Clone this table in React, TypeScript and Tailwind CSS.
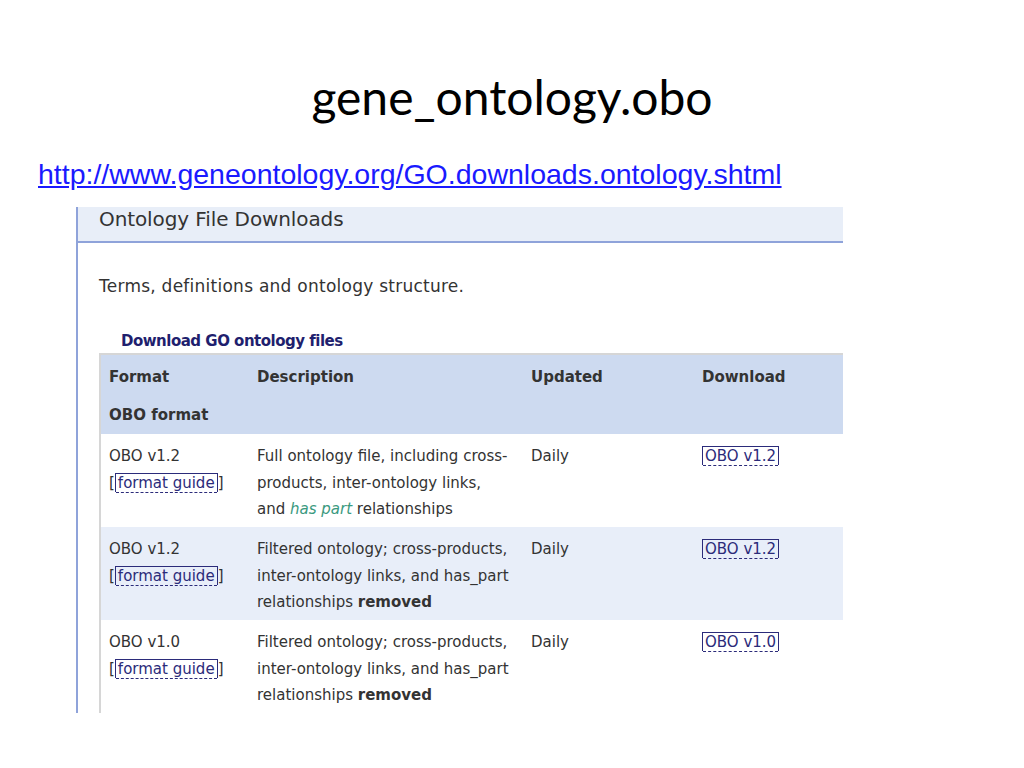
const body = "font-['DejaVu_Sans',sans-serif]";

function GuideLink({ children }: { children: React.ReactNode }) {
  return (
    <span className="border border-b-0 border-[#2b2b7a] text-[#2b2b7a] px-[2px] leading-[18px] inline-block relative">
      {children}
      <span className="absolute left-0 right-0 bottom-[-1px] border-b border-dashed border-[#2b2b7a]" />
    </span>
  );
}

function FormatCell({ version }: { version: string }) {
  return (
    <div className="pl-[8px]">
      <div>{version}</div>
      <div>
        [<GuideLink>format guide</GuideLink>]
      </div>
    </div>
  );
}

type Row = {
  version: string;
  desc: React.ReactNode;
  download: string;
  alt?: boolean;
};

const rows: Row[] = [
  {
    version: "OBO v1.2",
    desc: (
      <>
        Full ontology file, including cross-
        <br />
        products, inter-ontology links,
        <br />
        and <i className="text-[#3b9a80]">has part</i> relationships
      </>
    ),
    download: "OBO v1.2",
  },
  {
    version: "OBO v1.2",
    desc: (
      <>
        Filtered ontology; cross-products,
        <br />
        inter-ontology links, and has_part
        <br />
        relationships <b>removed</b>
      </>
    ),
    download: "OBO v1.2",
    alt: true,
  },
  {
    version: "OBO v1.0",
    desc: (
      <>
        Filtered ontology; cross-products,
        <br />
        inter-ontology links, and has_part
        <br />
        relationships <b>removed</b>
      </>
    ),
    download: "OBO v1.0",
  },
];

export default function App() {
  return (
    <div className="w-[1024px] h-[768px] bg-white overflow-hidden">
      <h1 className="text-center pt-[69px] text-[48px] leading-[56px] text-black font-['Lato',sans-serif]">
        gene_ontology.obo
      </h1>
      <div className="pl-[38px] mt-[33px] text-[28.5px] leading-[32px] font-['Liberation_Sans',sans-serif]">
        <a className="text-[#1a1aff] underline">http://www.geneontology.org/GO.downloads.ontology.shtml</a>
      </div>

      <div className={`ml-[76px] mt-[17px] w-[767px] h-[506px] overflow-hidden border-l-2 border-[#8fa3da] text-[#333] ${body}`}>
        <div className="h-[36px] bg-[#e8eef8] border-b-2 border-[#8fa3da] pl-[21px] pt-[1px] text-[20px] leading-[22px] -tracking-[0.1px]">
          Ontology File Downloads
        </div>
        <div className="pl-[21px] mt-[33px] text-[17px] leading-[20px] tracking-[0.25px]">
          Terms, definitions and ontology structure.
        </div>
        <div className="pl-[43px] mt-[35px] text-[15px] leading-[20px] font-bold text-[#1f1f6e] -tracking-[0.5px]">
          Download GO ontology files
        </div>

        <div className="ml-[21px] mt-[2px] border-t-2 border-l-2 border-[#d6d6d6] text-[15px]">
          <div className="bg-[#cddaf0] h-[79px] font-bold">
            <div className="grid grid-cols-[146px_274px_171px_151px] h-[40px] items-center pt-[4px]">
              <div className="pl-[8px]">Format</div>
              <div className="pl-[10px]">Description</div>
              <div className="pl-[10px]">Updated</div>
              <div className="pl-[10px]">Download</div>
            </div>
            <div className="pl-[8px] h-[39px] flex items-center pt-[1px]">OBO format</div>
          </div>
          {rows.map((r, i) => (
            <div
              key={i}
              className={`grid grid-cols-[146px_274px_171px_151px] h-[93px] pt-[9px] leading-[26.5px] ${r.alt ? "bg-[#e8eef9]" : "bg-white"}`}
            >
              <FormatCell version={r.version} />
              <div className="pl-[10px]">{r.desc}</div>
              <div className="pl-[10px]">Daily</div>
              <div className="pl-[10px]">
                <GuideLink>{r.download}</GuideLink>
              </div>
            </div>
          ))}
        </div>
      </div>
    </div>
  );
}
